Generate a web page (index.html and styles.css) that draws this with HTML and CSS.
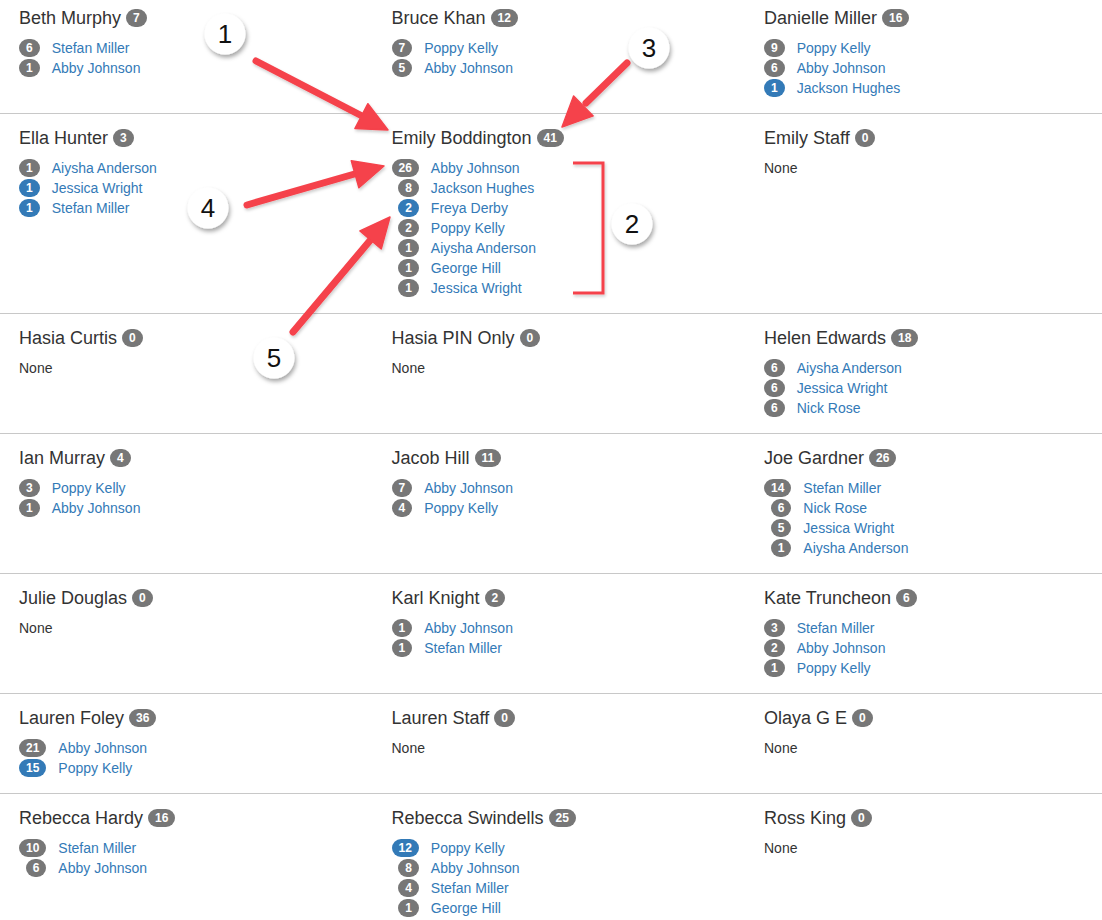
FILE: index.html
```html
<!DOCTYPE html>
<html lang="en">

<head>
	<meta charset="UTF-8">
	<meta name="viewport" content="width=device-width, initial-scale=1.0">
	<title>Ratings</title>
	<link rel="stylesheet" href="styles.css">
</head>

<body>
	<section class="board">
		<div class="row">
			<div class="cell">
				<h4>Beth Murphy <span class="badge">7</span></h4>
				<div class="list">
					<span class="badge">6</span><a>Stefan Miller</a>
					<span class="badge">1</span><a>Abby Johnson</a>
				</div>
			</div>
			<div class="cell">
				<h4>Bruce Khan <span class="badge">12</span></h4>
				<div class="list">
					<span class="badge">7</span><a>Poppy Kelly</a>
					<span class="badge">5</span><a>Abby Johnson</a>
				</div>
			</div>
			<div class="cell">
				<h4>Danielle Miller <span class="badge">16</span></h4>
				<div class="list">
					<span class="badge">9</span><a>Poppy Kelly</a>
					<span class="badge">6</span><a>Abby Johnson</a>
					<span class="badge blue">1</span><a>Jackson Hughes</a>
				</div>
			</div>
		</div>

		<div class="row">
			<div class="cell">
				<h4>Ella Hunter <span class="badge">3</span></h4>
				<div class="list">
					<span class="badge">1</span><a>Aiysha Anderson</a>
					<span class="badge blue">1</span><a>Jessica Wright</a>
					<span class="badge blue">1</span><a>Stefan Miller</a>
				</div>
			</div>
			<div class="cell">
				<h4>Emily Boddington <span class="badge">41</span></h4>
				<div class="list">
					<span class="badge">26</span><a>Abby Johnson</a>
					<span class="badge">8</span><a>Jackson Hughes</a>
					<span class="badge blue">2</span><a>Freya Derby</a>
					<span class="badge">2</span><a>Poppy Kelly</a>
					<span class="badge">1</span><a>Aiysha Anderson</a>
					<span class="badge">1</span><a>George Hill</a>
					<span class="badge">1</span><a>Jessica Wright</a>
				</div>
			</div>
			<div class="cell">
				<h4>Emily Staff <span class="badge">0</span></h4>
				<p class="none">None</p>
			</div>
		</div>

		<div class="row">
			<div class="cell">
				<h4>Hasia Curtis <span class="badge">0</span></h4>
				<p class="none">None</p>
			</div>
			<div class="cell">
				<h4>Hasia PIN Only <span class="badge">0</span></h4>
				<p class="none">None</p>
			</div>
			<div class="cell">
				<h4>Helen Edwards <span class="badge">18</span></h4>
				<div class="list">
					<span class="badge">6</span><a>Aiysha Anderson</a>
					<span class="badge">6</span><a>Jessica Wright</a>
					<span class="badge">6</span><a>Nick Rose</a>
				</div>
			</div>
		</div>

		<div class="row">
			<div class="cell">
				<h4>Ian Murray <span class="badge">4</span></h4>
				<div class="list">
					<span class="badge">3</span><a>Poppy Kelly</a>
					<span class="badge">1</span><a>Abby Johnson</a>
				</div>
			</div>
			<div class="cell">
				<h4>Jacob Hill <span class="badge">11</span></h4>
				<div class="list">
					<span class="badge">7</span><a>Abby Johnson</a>
					<span class="badge">4</span><a>Poppy Kelly</a>
				</div>
			</div>
			<div class="cell">
				<h4>Joe Gardner <span class="badge">26</span></h4>
				<div class="list">
					<span class="badge">14</span><a>Stefan Miller</a>
					<span class="badge">6</span><a>Nick Rose</a>
					<span class="badge">5</span><a>Jessica Wright</a>
					<span class="badge">1</span><a>Aiysha Anderson</a>
				</div>
			</div>
		</div>

		<div class="row">
			<div class="cell">
				<h4>Julie Douglas <span class="badge">0</span></h4>
				<p class="none">None</p>
			</div>
			<div class="cell">
				<h4>Karl Knight <span class="badge">2</span></h4>
				<div class="list">
					<span class="badge">1</span><a>Abby Johnson</a>
					<span class="badge">1</span><a>Stefan Miller</a>
				</div>
			</div>
			<div class="cell">
				<h4>Kate Truncheon <span class="badge">6</span></h4>
				<div class="list">
					<span class="badge">3</span><a>Stefan Miller</a>
					<span class="badge">2</span><a>Abby Johnson</a>
					<span class="badge">1</span><a>Poppy Kelly</a>
				</div>
			</div>
		</div>

		<div class="row">
			<div class="cell">
				<h4>Lauren Foley <span class="badge">36</span></h4>
				<div class="list">
					<span class="badge">21</span><a>Abby Johnson</a>
					<span class="badge blue">15</span><a>Poppy Kelly</a>
				</div>
			</div>
			<div class="cell">
				<h4>Lauren Staff <span class="badge">0</span></h4>
				<p class="none">None</p>
			</div>
			<div class="cell">
				<h4>Olaya G E <span class="badge">0</span></h4>
				<p class="none">None</p>
			</div>
		</div>

		<div class="row">
			<div class="cell">
				<h4>Rebecca Hardy <span class="badge">16</span></h4>
				<div class="list">
					<span class="badge">10</span><a>Stefan Miller</a>
					<span class="badge">6</span><a>Abby Johnson</a>
				</div>
			</div>
			<div class="cell">
				<h4>Rebecca Swindells <span class="badge">25</span></h4>
				<div class="list">
					<span class="badge blue">12</span><a>Poppy Kelly</a>
					<span class="badge">8</span><a>Abby Johnson</a>
					<span class="badge">4</span><a>Stefan Miller</a>
					<span class="badge">1</span><a>George Hill</a>
				</div>
			</div>
			<div class="cell">
				<h4>Ross King <span class="badge">0</span></h4>
				<p class="none">None</p>
			</div>
		</div>
	</section>

	<!-- annotation layer -->
	<svg class="notes" width="1102" height="920" viewBox="0 0 1102 920">
		<defs>
			<filter id="shadow" x="-30%" y="-30%" width="160%" height="160%">
				<feDropShadow dx="1.5" dy="3" stdDeviation="2" flood-color="#000" flood-opacity="0.35" />
			</filter>
			<filter id="soft" x="-10%" y="-10%" width="120%" height="120%">
				<feDropShadow dx="1" dy="2" stdDeviation="1.5" flood-color="#000" flood-opacity="0.2" />
			</filter>
		</defs>

		<g class="arrow" filter="url(#soft)">
			<line x1="256" y1="61" x2="364" y2="117" />
			<polygon points="388,130 354.9,128.5 367.9,103.7" />

			<line x1="627" y1="63" x2="586" y2="103" />
			<polygon points="562,127 573.6,95.9 593.2,115.9" />

			<line x1="247" y1="205" x2="358" y2="173" />
			<polygon points="384,166 358.9,187.7 351.3,160.7" />

			<line x1="293" y1="332" x2="373" y2="237" />
			<polygon points="390,217 381.3,248.9 359.9,230.9" />

			<polyline class="bracket" points="573,163 603,163 603,293 573,293" />
		</g>

		<g class="mark" filter="url(#shadow)">
			<circle cx="225" cy="34" r="20.5" />
			<circle cx="649" cy="48" r="20.5" />
			<circle cx="632" cy="224" r="20.5" />
			<circle cx="208" cy="208" r="20.5" />
			<circle cx="274" cy="358" r="20.5" />
		</g>
		<g class="mark-text">
			<text x="225" y="43">1</text>
			<text x="649" y="57">3</text>
			<text x="632" y="233">2</text>
			<text x="208" y="217">4</text>
			<text x="274" y="367">5</text>
		</g>
	</svg>
</body>

</html>
```

FILE: styles.css
```css
* {
	margin: 0;
	padding: 0;
	box-sizing: border-box;
}

html,
body {
	width: 100%;
	height: 100%;
	overflow: hidden;
}

body {
	position: relative;
	font-family: "Liberation Sans", Arial, sans-serif;
	font-size: 14px;
	line-height: 20px;
	color: #333;
	background: #fff;
}

.board {
	width: 1102px;
}

.row {
	display: grid;
	grid-template-columns: 372.5px 372.5px 372.5px;
	padding: 14px 0 15px 4px;
}

.row:first-child {
	padding-top: 8px;
}

.row+.row {
	border-top: 1px solid #c8c8c8;
}

.cell {
	padding-left: 15px;
}

h4 {
	font-size: 18px;
	font-weight: normal;
	line-height: 20px;
	margin-bottom: 10px;
	white-space: nowrap;
}

.badge {
	display: inline-block;
	min-width: 10px;
	padding: 3px 7px;
	font-size: 12px;
	font-weight: bold;
	line-height: 1;
	color: #fff;
	text-align: center;
	white-space: nowrap;
	background: #777;
	border-radius: 10px;
}

h4 .badge {
	vertical-align: 2px;
}

.badge.blue {
	background: #337ab7;
}

.list {
	display: grid;
	grid-template-columns: max-content auto;
	column-gap: 12px;
	align-items: center;
}

.list .badge {
	justify-self: end;
}

.list a {
	color: #337ab7;
	text-decoration: none;
	line-height: 20px;
}

.none {
	line-height: 20px;
}

.notes {
	position: absolute;
	top: 0;
	left: 0;
	pointer-events: none;
}

.arrow line {
	stroke: #f5424b;
	stroke-width: 7;
	stroke-linecap: round;
}

.arrow polygon {
	fill: #f5424b;
	stroke: #f5424b;
	stroke-width: 1.5;
	stroke-linejoin: round;
}

.arrow .bracket {
	fill: none;
	stroke: #f5424b;
	stroke-width: 3;
}

.mark circle {
	fill: #fff;
}

.mark-text text {
	font-family: "Liberation Sans", Arial, sans-serif;
	font-size: 26px;
	fill: #111;
	text-anchor: middle;
}
```
